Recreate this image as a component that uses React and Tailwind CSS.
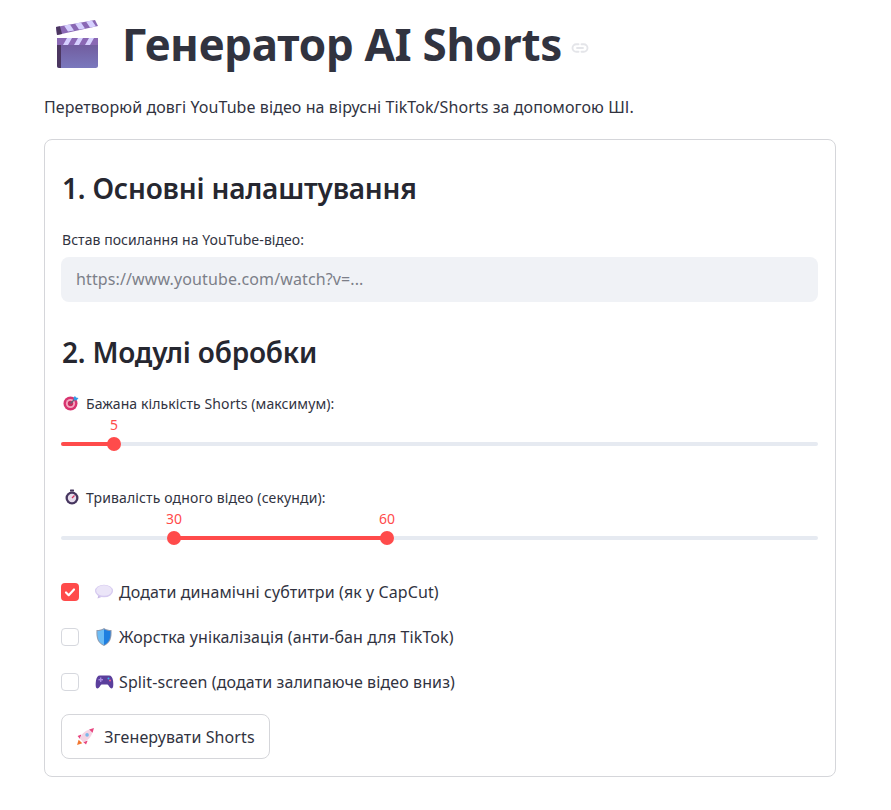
import React from "react";

const font = { fontFamily: '"Noto Sans", sans-serif' };

function Clapper() {
  return (
    <svg width="46" height="50" viewBox="0 0 46 50">
      <defs>
        <linearGradient id="clapBody" x1="0" y1="0" x2="0" y2="1">
          <stop offset="0" stopColor="#6f5596" />
          <stop offset="1" stopColor="#7a78bd" />
        </linearGradient>
      </defs>
      <rect x="2" y="18" width="41" height="30" rx="2.5" fill="url(#clapBody)" />
      <path d="M2 20.500a2.500 2.500 0 0 1 2.500-2.500H6v30H4.500A2.500 2.500 0 0 1 2 45.500z" fill="#4b3660" />
      <rect x="2" y="18" width="41" height="7" fill="#8a68b4" />
      <path d="M8 25l4-7h5l-4 7zM19 25l4-7h5l-4 7zM30 25l4-7h5l-4 7z" fill="#d6d0ff" />
      <path d="M1 7L40 0l3 6L2 15z" fill="#8a68b4" />
      <path d="M9 5.600l6-1.100 4 6-6 1.100zM20 3.600l6-1.100 4 6-6 1.100zM31 1.600l6-1.100 4 6-6 1.100z" fill="#d6d0ff" />
      <path d="M1 7l4-.7 2 7.800-5 .9z" fill="#4b3660" />
    </svg>
  );
}

function LinkIcon() {
  return (
    <svg width="18" height="18" viewBox="0 0 24 24" fill="none" stroke="#e4e5e9" strokeWidth="2.5" strokeLinecap="round">
      <path d="M10 7H7a5 5 0 0 0 0 10h3" />
      <path d="M14 7h3a5 5 0 0 1 0 10h-3" />
      <path d="M8 12h8" />
    </svg>
  );
}

function TargetEmoji() {
  return (
    <svg width="16" height="16" viewBox="0 0 16 16">
      <circle cx="7.500" cy="8.500" r="7" fill="#d8346f" />
      <circle cx="7.500" cy="8.500" r="4.600" fill="#f4a6c0" />
      <circle cx="7.500" cy="8.500" r="2.700" fill="#c92c60" />
      <path d="M7.500 8.500L13 3" stroke="#5a6a7a" strokeWidth="1.200" />
      <path d="M12 1l1 1.500 2.500.5-2 2.500-2.500-.5-.5-2.500z" fill="#2f9be8" />
    </svg>
  );
}

function TimerEmoji() {
  return (
    <svg width="16" height="16" viewBox="0 0 16 16">
      <rect x="6" y="0.500" width="4" height="2" rx="0.500" fill="#46365f" />
      <circle cx="8" cy="9" r="6.500" fill="#46365f" />
      <circle cx="8" cy="9" r="4.200" fill="#e6dcec" />
      <path d="M8 9l2.500-2.500" stroke="#d8345f" strokeWidth="1.200" />
    </svg>
  );
}

function BubbleEmoji() {
  return (
    <svg width="18" height="16" viewBox="0 0 18 16">
      <path d="M4 9l-1.500 5.500L9 12z" fill="#c9bbe6" />
      <ellipse cx="9" cy="7" rx="9" ry="6.300" fill="#d6caf0" />
      <ellipse cx="9" cy="6.500" rx="7.800" ry="5.300" fill="#ebe5f8" />
    </svg>
  );
}

function ShieldEmoji() {
  return (
    <svg width="16" height="18" viewBox="0 0 16 18">
      <path d="M8 0c2 1.500 4.500 2 7.500 2 .5 8-1 13-7.500 16C1.500 15 0 10 .5 2 3.500 2 6 1.500 8 0z" fill="#8f9bb0" />
      <path d="M8 1.200c2 1.300 4 1.700 6.500 1.800.3 7-1 11.500-6.500 14z" fill="#1f7fe0" />
      <path d="M8 1.200C6 2.500 4 2.900 1.500 3c-.3 7 1 11.500 6.500 14z" fill="#6cbcf5" />
    </svg>
  );
}

function GamepadEmoji() {
  return (
    <svg width="19" height="16" viewBox="0 0 19 16">
      <path d="M5 1.500h9c2.500 0 3.500 2 4 5 .5 3.500.7 8-1.500 8-1.500 0-2.500-3-4-4h-6c-1.500 1-2.500 4-4 4-2.200 0-2-4.500-1.500-8 .5-3 1.500-5 4-5z" fill="#5b3f9c" />
      <rect x="3.500" y="5" width="4.500" height="1.400" fill="#a78be0" />
      <rect x="5" y="3.500" width="1.400" height="4.500" fill="#a78be0" />
      <circle cx="13.500" cy="4.500" r="1" fill="#3fb6ef" />
      <circle cx="15" cy="6.500" r="1" fill="#ef5f8f" />
    </svg>
  );
}

function RocketEmoji() {
  return (
    <svg width="19" height="19" viewBox="0 0 18 18">
      <path d="M1 17l1.500-5 3.500 3.500z" fill="#f2762e" />
      <path d="M5 7L1.500 8.500 4 11.500zM11 13l-1.500 3.500-3-2.500z" fill="#e8457f" />
      <path d="M3.500 11C5.500 6 10 2.500 15 2l1 1c-.5 5-4 9.500-9 11.500z" fill="#f4d3e3" />
      <path d="M12.500 2.300L17 1l-1.300 4.500z" fill="#e8457f" />
      <circle cx="10.500" cy="7.500" r="1.700" fill="#7ab8ea" />
    </svg>
  );
}

function Slider({ left, right, leftLabel, rightLabel }) {
  return (
    <div className="relative h-[37px]">
      <div className="absolute left-0 right-0 top-[25px] h-1 rounded-full bg-[#e6eaf1]" />
      <div
        className="absolute top-[25px] h-1 rounded-full bg-[#ff4b4b]"
        style={{ left: left + "px", width: right - left + "px" }}
      />
      {leftLabel && <Thumb x={left} label={leftLabel} />}
      <Thumb x={right} label={rightLabel} />
    </div>
  );
}

function Thumb({ x, label }) {
  return (
    <>
      <span
        className="absolute -top-px -translate-x-1/2 text-[14px] leading-[17px] text-[#ff4b4b]"
        style={{ left: x + "px" }}
      >
        {label}
      </span>
      <span
        className="absolute top-[20px] h-[14px] w-[14px] -translate-x-1/2 rounded-full bg-[#ff4b4b]"
        style={{ left: x + "px" }}
      />
    </>
  );
}

function Check({ checked, icon, label }) {
  return (
    <div className="flex h-[20px] items-center">
      {checked ? (
        <span className="flex h-[18px] w-[18px] items-center justify-center rounded-[4px] bg-[#ff4b4b]">
          <svg width="12" height="12" viewBox="0 0 12 12" fill="none" stroke="#fff" strokeWidth="2.200" strokeLinecap="round" strokeLinejoin="round">
            <path d="M2 6.500l2.700 2.700L10 3.500" />
          </svg>
        </span>
      ) : (
        <span className="h-[18px] w-[18px] rounded-[4px] border border-[#d6d8de] bg-white" />
      )}
      <span className="ml-[15px] flex w-[20px] justify-center">{icon}</span>
      <span className="ml-[5px] text-[16px] leading-5 tracking-[0.1px] text-[#31333f]">{label}</span>
    </div>
  );
}

export default function App() {
  return (
    <div className="min-h-[810px] bg-white px-[44px] pt-[17px] text-[#31333f]" style={font}>
      <div className="w-[792px]">
        <div className="flex h-[56px] items-center">
          <span className="ml-[11px] flex w-[46px]"><Clapper /></span>
          <h1 className="ml-[21px] -mt-[2px] text-[44px] font-bold leading-[56px] tracking-[-0.3px] text-[#31333f]">
            Генератор AI Shorts
          </h1>
          <span className="ml-[9px] mt-[5px]"><LinkIcon /></span>
        </div>
        <p className="mt-[23px] text-[16px] leading-[22px] tracking-[0.08px]">
          Перетворюй довгі YouTube відео на вірусні TikTok/Shorts за допомогою ШІ.
        </p>
        <div className="mt-[21px] h-[638px] rounded-lg border border-[#d5d6da] pl-4 pr-[17px] pt-[28px]">
          <h2 className="ml-px text-[28px] font-semibold leading-[40px] tracking-[-0.2px] text-[#262730]">
            1. Основні налаштування
          </h2>
          <div className="ml-px mt-[22px] text-[14px] leading-5 tracking-[0.06px]">Встав посилання на YouTube-відео:</div>
          <div className="mt-[7px] flex h-[45px] items-center rounded-lg bg-[#f0f2f6] px-[15px] pb-[2px] text-[16px] tracking-[0.12px] text-[#7c7f89]">
            https://www.youtube.com/watch?v=...
          </div>
          <h2 className="ml-px mt-[30px] text-[28px] font-semibold leading-[40px] tracking-[-0.2px] text-[#262730]">
            2. Модулі обробки
          </h2>
          <div className="mt-[21px] flex h-5 items-center text-[14px] tracking-[0.1px]">
            <span className="ml-[2px] flex"><TargetEmoji /></span>
            <span className="ml-[7px]">Бажана кількість Shorts (максимум):</span>
          </div>
          <div className="mt-[4px]">
            <Slider left={0} right={53} rightLabel="5" />
          </div>
          <div className="mt-[33px] flex h-5 items-center text-[14px] tracking-[0.14px]">
            <span className="ml-[3px] flex"><TimerEmoji /></span>
            <span className="ml-[6px]">Тривалість одного відео (секунди):</span>
          </div>
          <div className="mt-[4px]">
            <Slider left={113} right={326} leftLabel="30" rightLabel="60" />
          </div>
          <div className="mt-[34px] flex flex-col gap-[25px]">
            <Check checked icon={<BubbleEmoji />} label="Додати динамічні субтитри (як у CapCut)" />
            <Check icon={<ShieldEmoji />} label="Жорстка унікалізація (анти-бан для TikTok)" />
            <Check icon={<GamepadEmoji />} label="Split-screen (додати залипаюче відео вниз)" />
          </div>
          <button className="mt-[22px] flex h-[45px] w-[209px] items-center justify-center rounded-lg border border-[#d5d6da] bg-white text-[16px] tracking-[0.1px] text-[#31333f]">
            <RocketEmoji />
            <span className="ml-[9px]">Згенерувати Shorts</span>
          </button>
        </div>
      </div>
    </div>
  );
}
